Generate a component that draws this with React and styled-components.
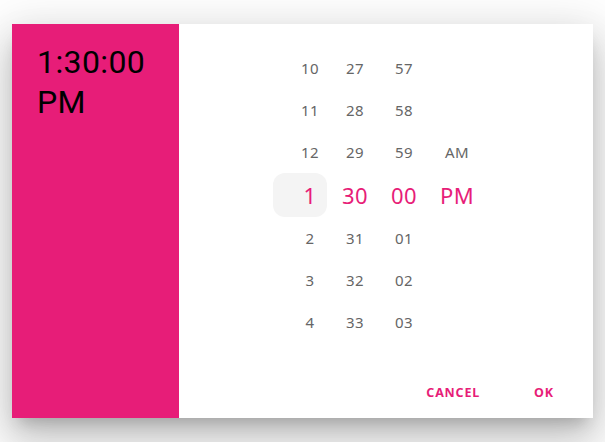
import React from "react";
import styled, { createGlobalStyle } from "styled-components";

const Global = createGlobalStyle`
  html, body { margin: 0; padding: 0; background: #fff; }
  body { font-family: "Noto Sans", "Open Sans", sans-serif; }
`;

const Page = styled.div`
  width: 605px;
  height: 442px;
  padding: 24px 12px;
  box-sizing: border-box;
`;

const Dialog = styled.div`
  display: flex;
  width: 581px;
  height: 394px;
  background: #fff;
  box-shadow: 0px 11px 15px -7px rgba(0,0,0,0.2), 0px 24px 38px 3px rgba(0,0,0,0.14), 0px 9px 46px 8px rgba(0,0,0,0.12);
`;

const Toolbar = styled.div`
  width: 167px;
  flex: none;
  background: #e71d78;
  padding: 18px 0 0 25px;
  box-sizing: border-box;
  display: flex;
  flex-direction: column;
`;

const HeaderLine = styled.div`
  color: #000;
  font-family: Roboto, "Noto Sans", sans-serif;
  font-size: 32px;
  line-height: 40px;
  height: 40px;
  font-weight: 400;
  letter-spacing: 0.4px;
`;

const Body = styled.div`
  flex: 1;
  display: flex;
  flex-direction: column;
`;

const Wheels = styled.div`
  display: flex;
  gap: 8px;
  padding: 23px 0 0 94px;
  height: 296px;
`;

const Column = styled.div`
  display: flex;
  flex-direction: column;
  width: ${p => p.$w}px;
`;

const Cell = styled.div`
  height: ${p => (p.$selected ? 44 : 42)}px;
  display: flex;
  align-items: center;
  justify-content: center;
  box-sizing: border-box;
  padding-left: ${p => p.$pad || 0}px;
  font-size: ${p => (p.$selected ? 22 : 15)}px;
  color: ${p => (p.$selected ? "#e71d78" : "#666")};
  background: ${p => (p.$highlight ? "#f4f4f4" : "transparent")};
  border-radius: 12px;
  letter-spacing: 0.3px;
`;

const Actions = styled.div`
  margin-top: auto;
  display: flex;
  justify-content: flex-end;
  gap: 24px;
  padding: 0 17px 8px 0;
`;

const Button = styled.button`
  min-width: 64px;
  height: 36px;
  padding: 6px 8px;
  border: 0;
  background: transparent;
  color: #e71d78;
  font-family: "Noto Sans", sans-serif;
  font-weight: 700;
  font-size: 12.5px;
  letter-spacing: 0.8px;
  cursor: pointer;
`;

const hours = ["10", "11", "12", "1", "2", "3", "4"];
const minutes = ["27", "28", "29", "30", "31", "32", "33"];
const seconds = ["57", "58", "59", "00", "01", "02", "03"];
const ampm = ["", "", "AM", "PM", "", "", ""];

function Wheel({ items, w, pad, highlight }) {
  return (
    <Column $w={w}>
      {items.map((t, i) => (
        <Cell key={i} $selected={i === 3} $pad={pad} $highlight={highlight && i === 3}>
          {t}
        </Cell>
      ))}
    </Column>
  );
}

export default function App() {
  return (
    <>
      <Global />
      <Page>
        <Dialog>
          <Toolbar>
            <HeaderLine>1:30:00</HeaderLine>
            <HeaderLine>PM</HeaderLine>
          </Toolbar>
          <Body>
            <Wheels>
              <Wheel items={hours} w={54} pad={20} highlight />
              <Wheel items={minutes} w={40} />
              <Wheel items={seconds} w={42} />
              <Wheel items={ampm} w={48} />
            </Wheels>
            <Actions>
              <Button>CANCEL</Button>
              <Button>OK</Button>
            </Actions>
          </Body>
        </Dialog>
      </Page>
    </>
  );
}
